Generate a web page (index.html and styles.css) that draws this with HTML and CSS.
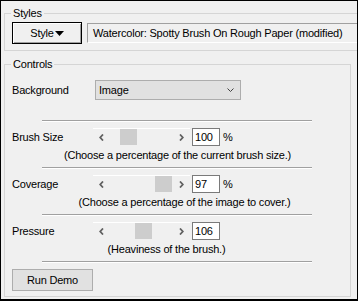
FILE: index.html
```html
<!DOCTYPE html>
<html lang="en">
<head>
    <meta charset="UTF-8">
    <title>Watercolor Controls</title>
    <link rel="stylesheet" href="styles.css">
</head>
<body>
    <div class="window">
        <fieldset class="group group-styles">
            <legend>Styles</legend>
            <div class="style-row">
                <button type="button" class="btn-style">Style<svg class="tri" width="9" height="5" viewBox="0 0 9 5"><polygon points="0,0 9,0 4.5,5" fill="#000"/></svg></button>
                <div class="style-name">Watercolor: Spotty Brush On Rough Paper (modified)</div>
            </div>
        </fieldset>

        <fieldset class="group group-controls">
            <legend>Controls</legend>

            <div class="row row-select">
                <span class="label label-wide">Background</span>
                <div class="select">
                    <span>Image</span>
                    <svg width="7" height="4" viewBox="0 0 7 4"><polyline points="0.5,0.5 3.5,3.5 6.5,0.5" fill="none" stroke="#404040" stroke-width="1"/></svg>
                </div>
            </div>

            <hr class="sep sep-first">

            <div class="row">
                <span class="label">Brush Size</span>
                <div class="slider">
                    <span class="arrow"><svg width="5" height="7" viewBox="0 0 5 7"><polyline points="4,0.5 1.2,3.5 4,6.5" fill="none" stroke="#606060" stroke-width="1.8"/></svg></span>
                    <div class="track"><div class="thumb" style="margin-left: 10px"></div></div>
                    <span class="arrow"><svg width="5" height="7" viewBox="0 0 5 7"><polyline points="1,0.5 3.8,3.5 1,6.5" fill="none" stroke="#606060" stroke-width="1.8"/></svg></span>
                </div>
                <div class="num">100</div>
                <span class="unit">%</span>
            </div>
            <p class="help">(Choose a percentage of the current brush size.)</p>

            <hr class="sep">

            <div class="row">
                <span class="label">Coverage</span>
                <div class="slider">
                    <span class="arrow"><svg width="5" height="7" viewBox="0 0 5 7"><polyline points="4,0.5 1.2,3.5 4,6.5" fill="none" stroke="#606060" stroke-width="1.8"/></svg></span>
                    <div class="track"><div class="thumb" style="margin-left: 45px"></div></div>
                    <span class="arrow"><svg width="5" height="7" viewBox="0 0 5 7"><polyline points="1,0.5 3.8,3.5 1,6.5" fill="none" stroke="#606060" stroke-width="1.8"/></svg></span>
                </div>
                <div class="num">97</div>
                <span class="unit">%</span>
            </div>
            <p class="help help-cover">(Choose a percentage of the image to cover.)</p>

            <hr class="sep">

            <div class="row">
                <span class="label">Pressure</span>
                <div class="slider">
                    <span class="arrow"><svg width="5" height="7" viewBox="0 0 5 7"><polyline points="4,0.5 1.2,3.5 4,6.5" fill="none" stroke="#606060" stroke-width="1.8"/></svg></span>
                    <div class="track"><div class="thumb" style="margin-left: 25px"></div></div>
                    <span class="arrow"><svg width="5" height="7" viewBox="0 0 5 7"><polyline points="1,0.5 3.8,3.5 1,6.5" fill="none" stroke="#606060" stroke-width="1.8"/></svg></span>
                </div>
                <div class="num">106</div>
            </div>
            <p class="help help-pressure">(Heaviness of the brush.)</p>

            <hr class="sep">

            <button type="button" class="btn-run">Run Demo</button>
        </fieldset>
    </div>
</body>
</html>
```

FILE: styles.css
```css
body {
    margin: 0;
    padding: 0;
}

.window {
    width: 358px;
    height: 301px;
    box-sizing: border-box;
    border: 1px solid #000;
    border-bottom-width: 2px;
    background: #f0f0f0;
    padding: 6px 0 0 3px;
    overflow: hidden;
    font-family: 'Liberation Sans', Arial, sans-serif;
    font-size: 11px;
    letter-spacing: -0.2px;
    color: #000;
}

.group {
    margin: 0;
    min-width: 0;
    border: 1px solid #d5d5d5;
    padding: 2px 7px 6px;
}

.group legend {
    padding: 0 2px;
    margin-left: -1px;
    line-height: 13px;
}

.group-styles {
    margin-right: -20px;
}

.group-controls {
    margin-top: 7px;
    margin-right: 6px;
    padding: 9px 7px 5px;
}

.style-row {
    display: flex;
    align-items: center;
    gap: 5px;
}

.btn-style {
    width: 70px;
    height: 22px;
    box-sizing: border-box;
    border: 1px solid #000;
    background: #f0f0f0;
    box-shadow: inset 1px 1px #fff, inset -1px -1px #a0a0a0;
    font: inherit;
    letter-spacing: inherit;
    color: #000;
    padding: 0;
    display: flex;
    align-items: center;
    justify-content: center;
    gap: 1px;
}

.tri {
    display: block;
    margin-top: 1px;
}

.style-name {
    flex: 1;
    height: 20px;
    box-sizing: border-box;
    border-top: 1px solid #a0a0a0;
    border-left: 1px solid #a0a0a0;
    border-bottom: 1px solid #fff;
    border-right: 1px solid #fff;
    padding-left: 5px;
    line-height: 18px;
    white-space: nowrap;
}

.row {
    display: flex;
    align-items: center;
    height: 18px;
    margin-top: 6px;
}

.row-select {
    height: 20px;
    margin-top: 0;
}

.label {
    width: 81px;
    flex-shrink: 0;
}

.label-wide {
    width: 83px;
}

.select {
    width: 146px;
    height: 20px;
    box-sizing: border-box;
    border: 1px solid #adadad;
    background: #e1e1e1;
    padding: 0 6px 0 3px;
    display: flex;
    align-items: center;
    justify-content: space-between;
}

.slider {
    width: 97px;
    height: 18px;
    box-sizing: border-box;
    border-top: 1px solid #fff;
    display: flex;
}

.arrow {
    width: 17px;
    display: flex;
    align-items: center;
    justify-content: center;
}

.arrow svg {
    display: block;
}

.track {
    flex: 1;
}

.thumb {
    width: 17px;
    height: 16px;
    background: #cdcdcd;
}

.num {
    width: 28px;
    height: 18px;
    box-sizing: border-box;
    margin-left: 2px;
    border: 1px solid #7a7a7a;
    background: #fff;
    padding-left: 2px;
    line-height: 16px;
}

.unit {
    margin-left: 3px;
}

.help {
    margin: 3px 0 0;
    line-height: 13px;
    text-align: center;
    white-space: nowrap;
}

.help-cover {
    padding-left: 14px;
}

.help-pressure {
    padding-right: 22px;
}

.sep {
    width: 270px;
    height: 0;
    margin: 5px 0 0 30px;
    border: 0;
    border-top: 1px solid #a0a0a0;
    border-bottom: 1px solid #fff;
}

.sep-first {
    margin-top: 20px;
}

.btn-run {
    display: block;
    margin-top: 6px;
    width: 81px;
    height: 22px;
    box-sizing: border-box;
    border: 1px solid #adadad;
    background: #e1e1e1;
    font: inherit;
    letter-spacing: inherit;
    color: #000;
    padding: 0;
}
```
